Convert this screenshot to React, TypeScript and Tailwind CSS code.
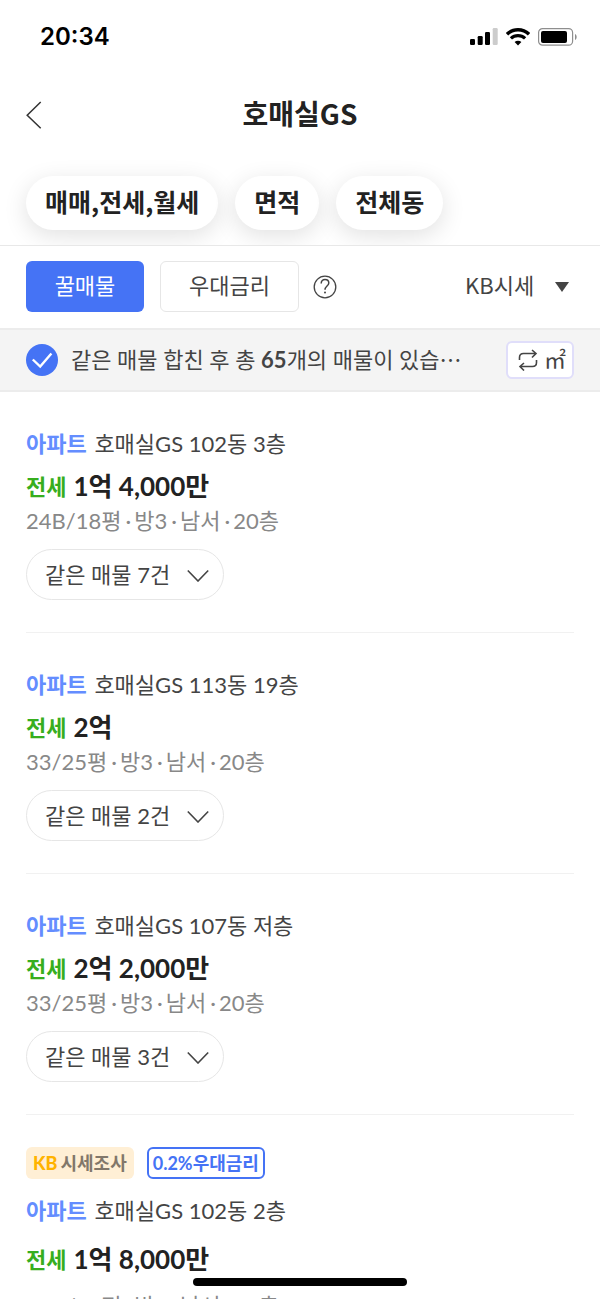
import { Fragment, useState } from "react"

type Listing = {
  title: string
  price: string
  detail: string[]
  same?: number
  badges?: boolean
}

const filters = ["매매,전세,월세", "면적", "전체동"]

const listings: Listing[] = [
  { title: "호매실GS 102동 3층", price: "1억 4,000만", detail: ["24B/18평", "방3", "남서", "20층"], same: 7 },
  { title: "호매실GS 113동 19층", price: "2억", detail: ["33/25평", "방3", "남서", "20층"], same: 2 },
  { title: "호매실GS 107동 저층", price: "2억 2,000만", detail: ["33/25평", "방3", "남서", "20층"], same: 3 },
  { title: "호매실GS 102동 2층", price: "1억 8,000만", detail: ["24B/18평", "방3", "남서", "20층"], badges: true },
]

function StatusBar() {
  return (
    <div className="flex h-[74px] shrink-0 items-center justify-between pr-[22px] pl-10 font-['Inter',sans-serif]">
      <span className="text-2xl font-semibold text-black">20:34</span>
      <div className="flex items-center gap-2">
        <svg width="28" height="18" viewBox="0 0 28 18" aria-hidden="true">
          <rect x="0" y="11" width="5" height="6" rx="1.2" />
          <rect x="7.7" y="8" width="5" height="9" rx="1.2" />
          <rect x="15" y="4" width="5" height="13" rx="1.2" />
          <rect x="22.7" y="0" width="5" height="17" rx="1.2" fill="#cccccc" />
        </svg>
        <svg width="24" height="18" viewBox="0 0 24 18" fill="none" stroke="#000" aria-hidden="true">
          <path d="M1 6.2C7 .3 17 .3 23 6.2" strokeWidth="3.4" />
          <path d="M4.9 10.4c4-3.8 10.2-3.8 14.2 0" strokeWidth="3.2" />
          <path d="M12 17.4l-3.4-3.5c1.9-1.7 4.9-1.7 6.8 0z" fill="#000" stroke="none" />
        </svg>
        <svg width="40" height="18" viewBox="0 0 40 18" aria-hidden="true">
          <rect x=".6" y=".6" width="34" height="16.6" rx="4" fill="none" stroke="#8e8e8e" strokeWidth="1.2" />
          <rect x="3" y="3" width="26" height="12" rx="2" />
          <path d="M37 6c2.2.8 2.2 5.2 0 6z" fill="#8e8e8e" />
        </svg>
      </div>
    </div>
  )
}

function Header() {
  return (
    <header className="grid h-[82px] shrink-0 grid-cols-[1fr_auto_1fr] items-center px-[26px]">
      <button type="button" aria-label="뒤로" className="w-fit">
        <svg width="16" height="28" viewBox="0 0 16 28" fill="none" stroke="#333" strokeWidth="1.5">
          <path d="M14.7 1L1.2 14.2l13.5 13" />
        </svg>
      </button>
      <h1 className="pb-1 font-['Noto_Sans_CJK_KR',sans-serif] text-[28px] font-bold text-[#222]">호매실GS</h1>
    </header>
  )
}

function ListingItem({ item }: { item: Listing }) {
  return (
    <li className="border-b border-[#f1f1f1] pt-8 pb-8">
      {item.badges && (
        <div className="mb-3 flex gap-[13px] text-lg leading-7 font-bold">
          <span className="flex h-8 items-center gap-[3px] rounded-md bg-[#ffefd5] px-[7px] text-[#82776a]">
            <b className="text-[#ffb300]">KB</b>시세조사
          </span>
          <span className="flex h-8 items-center rounded-md border-2 border-[#4573f5] px-1 text-[#4573f5]">
            0.2%우대금리
          </span>
        </div>
      )}
      <h2 className="text-[22px] leading-10 text-[#444]">
        <b className="text-[#648dff]">아파트</b> <span className="ml-0.5">{item.title}</span>
      </h2>
      <p
        className={
          item.badges
            ? "mb-1.5 flex h-14 items-center gap-[7px] text-[26px] font-bold"
            : "flex h-11 items-center gap-[7px] text-[26px] font-bold"
        }
      >
        <span className="text-[22px] text-[#37ae1e]">전세</span>
        <span className="text-[#222]">{item.price}</span>
      </p>
      <p className="text-[22px] leading-[26px] text-[#888]">
        {item.detail.map((text, i) => (
          <Fragment key={text}>
            {i > 0 && <span className="mr-[3px] ml-1">·</span>}
            {text}
          </Fragment>
        ))}
      </p>
      {item.same && (
        <button
          type="button"
          className="mt-[15px] flex h-[51px] items-center gap-[17px] rounded-full border border-[#e6e6e6] pr-3.5 pl-[18px] text-[22px] text-[#444]"
        >
          <span>같은 매물 {item.same}건</span>
          <svg width="22" height="14" viewBox="0 0 22 14" fill="none" stroke="#444" strokeWidth="1.6" aria-hidden="true">
            <path d="M.8 2.5L11 13 21.2 2.5" />
          </svg>
        </button>
      )}
    </li>
  )
}

export default function App() {
  const [merged, setMerged] = useState(true)

  return (
    <div lang="ko" className="relative flex h-screen flex-col overflow-hidden bg-white font-['Lato','Noto_Sans_CJK_KR',sans-serif]">
      <StatusBar />
      <Header />

      <div className="flex shrink-0 gap-[17px] overflow-hidden border-b border-[#e8e8e8] px-[26px] pt-5 pb-[15px]">
        {filters.map((label) => (
          <button
            key={label}
            type="button"
            className="h-[54px] rounded-full bg-white px-[19px] pb-0.5 font-['Noto_Sans_CJK_KR',sans-serif] text-[25px] font-bold text-[#222] shadow-[0_6px_24px_rgba(0,0,0,0.12)]"
          >
            {label}
          </button>
        ))}
      </div>

      <div className="flex shrink-0 items-center px-[26px] pt-[15px] pb-4 text-[22px] text-[#444]">
        <button type="button" className="h-[51px] w-[118px] rounded-md bg-[#4573f5] pb-0.5 text-white">
          꿀매물
        </button>
        <button type="button" className="ml-4 h-[51px] w-[139px] rounded-md border border-[#e6e6e6] pb-0.5">
          우대금리
        </button>
        <button type="button" aria-label="도움말" className="ml-3.5">
          <svg width="24" height="24" viewBox="0 0 24 24" fill="none" stroke="#444" strokeWidth="1.3">
            <circle cx="12" cy="12" r="10.8" />
            <path d="M8.2 8.4c0-2.4 1.6-3.9 3.8-3.9s3.8 1.5 3.8 3.5c0 3-3.8 3.2-3.8 6.8" strokeWidth="1.5" />
            <circle cx="12" cy="17.6" r="1" fill="#444" stroke="none" />
          </svg>
        </button>
        <div className="relative ml-auto">
          <select aria-label="정렬" className="appearance-none bg-white pr-[39px] pb-1 font-['Noto_Sans_CJK_KR',sans-serif]">
            <option>KB시세</option>
          </select>
          <svg
            className="pointer-events-none absolute top-1/2 right-[5px] -translate-y-1/2"
            width="14"
            height="10"
            viewBox="0 0 14 10"
            fill="#444"
            aria-hidden="true"
          >
            <path d="M0 0h14L7 10z" />
          </svg>
        </div>
      </div>

      <div className="flex h-16 shrink-0 items-center justify-between border-y-2 border-[#ececec] bg-[#f4f4f4] px-[26px] text-[22px] text-[#444]">
        <label className="flex items-center gap-[13px] whitespace-nowrap">
          <span className="grid">
            <input
              type="checkbox"
              checked={merged}
              onChange={() => setMerged(!merged)}
              className="col-start-1 row-start-1 size-8 appearance-none rounded-full bg-[#ccc] checked:bg-[#4573f5]"
            />
            <svg
              className="pointer-events-none col-start-1 row-start-1"
              width="32"
              height="32"
              viewBox="0 0 32 32"
              fill="none"
              stroke="#fff"
              strokeWidth="2.4"
              aria-hidden="true"
            >
              <path d="M6.8 15.5l7.4 7L25.4 9.5" />
            </svg>
          </span>
          <span className="pb-0.5">
            같은 매물 합친 후 총 <b>65</b>개의 매물이 있습
            <span className="font-['Noto_Sans_CJK_KR',sans-serif]">…</span>
          </span>
        </label>
        <button
          type="button"
          aria-label="제곱미터로 보기"
          className="flex h-[38px] items-center gap-1.5 rounded-md border-2 border-[#e0defa] bg-white pr-1.5 pl-2.5"
        >
          <svg width="20" height="22" viewBox="0 0 20 22" fill="none" stroke="#444" strokeWidth="1.6" aria-hidden="true">
            <path d="M1.5 11V8.500q0-4 4-4H18M14 1l4 3.500L14 8.500" />
            <path d="M18.500 11v2.500q0 4-4 4H2M6 14l-4 3.500L6 21.500" />
          </svg>
          <span className="pb-1 font-['Noto_Sans_CJK_KR',sans-serif]">㎡</span>
        </button>
      </div>

      <ul className="min-h-0 flex-1 overflow-y-auto px-[26px] [scrollbar-width:none]">
        {listings.map((item) => (
          <ListingItem key={item.title} item={item} />
        ))}
      </ul>

      <div className="absolute bottom-[13px] left-1/2 h-2 w-[214px] -translate-x-1/2 rounded-full bg-black" />
    </div>
  )
}
